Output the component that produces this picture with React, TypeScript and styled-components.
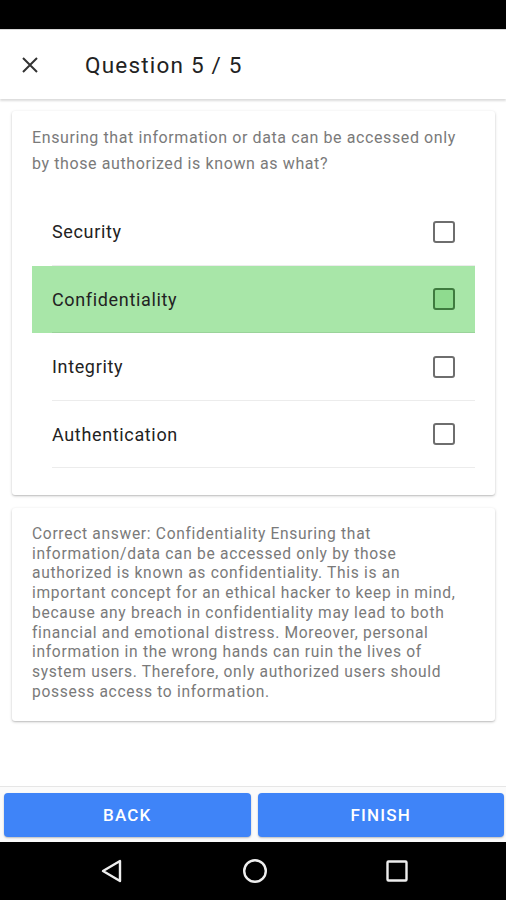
import React from 'react';
import styled, { createGlobalStyle } from 'styled-components';

const GlobalStyle = createGlobalStyle`
  html, body {
    margin: 0;
    padding: 0;
    background: #fff;
  }
  body {
    font-family: Roboto, "Noto Sans", "Liberation Sans", sans-serif;
  }
  * {
    box-sizing: border-box;
  }
`;

const Screen = styled.div`
  width: 506px;
  height: 900px;
  display: flex;
  flex-direction: column;
  background: #fff;
  overflow: hidden;
`;

const StatusBar = styled.div`
  height: 29px;
  background: #000;
  flex-shrink: 0;
`;

const AppBar = styled.div`
  height: 70px;
  display: flex;
  align-items: center;
  padding-left: 20px;
  gap: 45px;
  background: #fff;
  border-top: 1px solid #d8d8d8;
  box-shadow: 0 2px 2px rgba(0, 0, 0, 0.14);
  position: relative;
  z-index: 1;
  flex-shrink: 0;
`;

const CloseButton = styled.button`
  width: 20px;
  height: 20px;
  padding: 0;
  border: none;
  background: none;
  display: flex;
  align-items: center;
  justify-content: center;
  color: #333;
`;

const Title = styled.div`
  font-size: 22.5px;
  color: #222;
  letter-spacing: 1.2px;
  margin-top: 1px;
`;

const Content = styled.div`
  flex: 1;
  display: flex;
  flex-direction: column;
  gap: 13px;
  padding: 12px 11px 12px 12px;
`;

const Card = styled.div`
  background: #fff;
  border-radius: 3px;
  box-shadow: 0 1px 3px rgba(0, 0, 0, 0.22), 0 1px 1px rgba(0, 0, 0, 0.08);
`;

const QuestionCard = styled(Card)`
  padding: 14px 20px 27px 20px;
`;

const QuestionText = styled.div`
  font-size: 16px;
  line-height: 26px;
  letter-spacing: 0.6px;
  color: #7a7a7a;
`;

const OptionList = styled.div`
  margin-top: 21px;
  display: flex;
  flex-direction: column;
`;

const OptionRow = styled.div<{ $correct?: boolean }>`
  height: 67.5px;
  display: flex;
  align-items: center;
  justify-content: space-between;
  padding: 0 20px;
  background: ${p => (p.$correct ? '#a8e6a8' : 'transparent')};
  position: relative;

  &::after {
    content: '';
    position: absolute;
    left: 20px;
    right: 0;
    bottom: 0;
    height: 1px;
    background: ${p => (p.$correct ? '#9ad39a' : '#ececec')};
  }
`;

const OptionLabel = styled.span`
  font-size: 18px;
  color: #222;
  letter-spacing: 0.65px;
`;

const CheckBox = styled.span<{ $correct?: boolean }>`
  width: 22px;
  height: 22px;
  border-radius: 3px;
  border: 2px solid ${p => (p.$correct ? '#3f7b3f' : '#6e6e6e')};
  background: ${p => (p.$correct ? '#8fdb8f' : '#fff')};
`;

const ExplanationCard = styled(Card)`
  padding: 17px 20px 19px 20px;
`;

const Explanation = styled.div`
  font-size: 15.6px;
  line-height: 19.7px;
  letter-spacing: 0.68px;
  color: #7a7a7a;
`;

const Footer = styled.div`
  display: flex;
  gap: 7px;
  padding: 6px 2px 5px 4px;
  border-top: 1px solid #e6e6e6;
  background: #fbfbfb;
  flex-shrink: 0;
`;

const ActionButton = styled.button`
  flex: 1;
  height: 44px;
  border: none;
  border-radius: 4px;
  background: #3f84f8;
  color: #fff;
  font-family: Roboto, "Noto Sans", sans-serif;
  font-size: 17px;
  font-weight: 500;
  letter-spacing: 1.2px;
  box-shadow: 0 1px 2px rgba(0, 0, 0, 0.25);
`;

const NavBar = styled.div`
  height: 58px;
  background: #000;
  display: flex;
  align-items: center;
  justify-content: space-between;
  padding: 0 98px 0 101px;
  flex-shrink: 0;
`;

const NavIcon = styled.svg`
  display: block;
`;

const options = [
  { label: 'Security', correct: false },
  { label: 'Confidentiality', correct: true },
  { label: 'Integrity', correct: false },
  { label: 'Authentication', correct: false },
];

const App: React.FC = () => {
  return (
    <Screen>
      <GlobalStyle />
      <StatusBar />
      <AppBar>
        <CloseButton aria-label="close">
          <svg width="18" height="18" viewBox="0 0 18 18">
            <path d="M2 2 L16 16 M16 2 L2 16" stroke="#333" strokeWidth="2" fill="none" />
          </svg>
        </CloseButton>
        <Title>Question 5 / 5</Title>
      </AppBar>
      <Content>
        <QuestionCard>
          <QuestionText>
            Ensuring that information or data can be accessed only by those authorized is known as what?
          </QuestionText>
          <OptionList>
            {options.map(o => (
              <OptionRow key={o.label} $correct={o.correct}>
                <OptionLabel>{o.label}</OptionLabel>
                <CheckBox $correct={o.correct} />
              </OptionRow>
            ))}
          </OptionList>
        </QuestionCard>
        <ExplanationCard>
          <Explanation>
            Correct answer: Confidentiality Ensuring that information/data can be accessed only by those
            authorized is known as confidentiality. This is an important concept for an ethical hacker to
            keep in mind, because any breach in confidentiality may lead to both financial and emotional
            distress. Moreover, personal information in the wrong hands can ruin the lives of system users.
            Therefore, only authorized users should possess access to information.
          </Explanation>
        </ExplanationCard>
      </Content>
      <Footer>
        <ActionButton>BACK</ActionButton>
        <ActionButton>FINISH</ActionButton>
      </Footer>
      <NavBar>
        <NavIcon width="22" height="24" viewBox="0 0 22 24">
          <path d="M19 2 L19 22 L2 12 Z" stroke="#eee" strokeWidth="2.4" fill="none" strokeLinejoin="round" />
        </NavIcon>
        <NavIcon width="26" height="26" viewBox="0 0 26 26">
          <circle cx="13" cy="13" r="10.8" stroke="#eee" strokeWidth="2.4" fill="none" />
        </NavIcon>
        <NavIcon width="22" height="22" viewBox="0 0 22 22">
          <rect x="1.5" y="1.5" width="19" height="19" rx="1" stroke="#eee" strokeWidth="2.4" fill="none" />
        </NavIcon>
      </NavBar>
    </Screen>
  );
};

export default App;
